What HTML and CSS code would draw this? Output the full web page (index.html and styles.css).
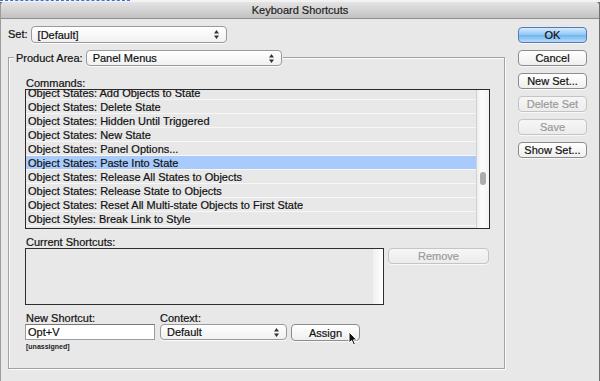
FILE: index.html
```html
<!DOCTYPE html>
<html lang="en">
<head>
  <meta charset="UTF-8" />
  <meta name="viewport" content="width=device-width, initial-scale=1.0"/>
  <title>Keyboard Shortcuts</title>
  <link rel="stylesheet" href="styles.css">
</head>
<body>
  <div class="desk"><div class="desk-dash"></div></div>
  <div class="window">
    <div class="titlebar">Keyboard Shortcuts</div>
    <div class="dialog">
      <div class="main">
        <div class="set-row">
          <span class="lbl">Set:</span>
          <div class="popup set-popup">
            <span>[Default]</span>
            <svg class="arrows" width="5" height="9" viewBox="0 0 5 9"><path d="M2.5 0 L5 3.5 H0 Z M2.5 9 L5 5.5 H0 Z" fill="#333"/></svg>
          </div>
        </div>

        <div class="group">
          <div class="group-head">
            <span class="lbl">Product Area:</span>
            <div class="popup area-popup">
              <span>Panel Menus</span>
              <svg class="arrows" width="5" height="9" viewBox="0 0 5 9"><path d="M2.5 0 L5 3.5 H0 Z M2.5 9 L5 5.5 H0 Z" fill="#333"/></svg>
            </div>
          </div>

          <div class="field-label">Commands:</div>
          <div class="list">
            <div class="rows">
              <div class="row first">Object States: Add Objects to State</div>
              <div class="row">Object States: Delete State</div>
              <div class="row">Object States: Hidden Until Triggered</div>
              <div class="row">Object States: New State</div>
              <div class="row">Object States: Panel Options...</div>
              <div class="row selected">Object States: Paste Into State</div>
              <div class="row">Object States: Release All States to Objects</div>
              <div class="row">Object States: Release State to Objects</div>
              <div class="row">Object States: Reset All Multi-state Objects to First State</div>
              <div class="row">Object Styles: Break Link to Style</div>
            </div>
            <div class="scroll"><div class="thumb"></div></div>
          </div>

          <div class="field-label">Current Shortcuts:</div>
          <div class="shortcut-row">
            <div class="shortcut-box"><div class="box-strip"></div></div>
            <button class="btn remove" disabled>Remove</button>
          </div>

          <div class="new-row">
            <div class="col">
              <div class="field-label">New Shortcut:</div>
              <div class="text-input">Opt+V</div>
              <div class="note">[unassigned]</div>
            </div>
            <div class="col context">
              <div class="field-label">Context:</div>
              <div class="popup context-popup">
                <span>Default</span>
                <svg class="arrows" width="5" height="9" viewBox="0 0 5 9"><path d="M2.5 0 L5 3.5 H0 Z M2.5 9 L5 5.5 H0 Z" fill="#333"/></svg>
              </div>
            </div>
            <div class="assign-wrap">
              <button class="btn assign">Assign</button>
              <svg class="cursor" width="10" height="15" viewBox="0 0 10 15">
                <path d="M1 1 L1 12 L3.6 9.6 L5.6 14 L7.4 13.2 L5.4 8.9 L8.8 8.9 Z" fill="#111" stroke="#fff" stroke-width="1"/>
              </svg>
            </div>
          </div>
        </div>
      </div>

      <div class="side">
        <button class="btn default">OK</button>
        <button class="btn">Cancel</button>
        <button class="btn">New Set...</button>
        <button class="btn" disabled>Delete Set</button>
        <button class="btn" disabled>Save</button>
        <button class="btn">Show Set...</button>
      </div>
    </div>
  </div>
</body>
</html>
```

FILE: styles.css
```css
body {
  margin: 0;
  width: 600px;
  height: 381px;
  overflow: hidden;
  background-color: #6f6f6f;
  font-family: 'Liberation Sans', Arial, sans-serif;
  font-size: 11px;
  color: #111;
  -webkit-text-stroke: 0.2px;
}
.desk {
  height: 2px;
  background-color: #f2f2f2;
}
.desk-dash {
  width: 130px;
  border-top: 1px dashed #3b6fe0;
}
.window {
  width: 598px;
  height: 379px;
  background-color: #e8e8e8;
  border-left: 1px solid #9c9c9c;
  border-radius: 4px 4px 0 0;
  overflow: hidden;
}
.titlebar {
  height: 16px;
  line-height: 17px;
  text-align: center;
  font-size: 11px;
  color: #222;
  background: linear-gradient(#e4e4e4, #c2c2c2);
  border-bottom: 1px solid #8e8e8e;
}
.dialog {
  display: flex;
  padding: 7px 0 0 7px;
}
.main {
  width: 497px;
}
.lbl {
  line-height: 17px;
}
.set-row {
  display: flex;
  align-items: center;
  height: 17px;
}
.popup {
  display: flex;
  align-items: center;
  justify-content: space-between;
  box-sizing: border-box;
  height: 17px;
  padding: 0 7px 0 6px;
  background: linear-gradient(#ffffff, #f1f1f1);
  border: 1px solid #9a9a9a;
  border-radius: 4px;
  box-shadow: 0 1px 0 rgba(255, 255, 255, 0.8);
}
.set-popup {
  width: 196px;
  margin-left: 3px;
}
.group {
  box-sizing: border-box;
  height: 312px;
  margin-top: 14px;
  border: 1px solid #a2a2a2;
  box-shadow: 1px 1px 0 #fbfbfb, inset 1px 1px 0 #fbfbfb;
}
.group-head {
  display: flex;
  align-items: center;
  width: fit-content;
  height: 16px;
  margin: -8px 0 0 5px;
  padding: 0 1px 0 2px;
  background-color: #e8e8e8;
}
.area-popup {
  width: 196px;
  height: 16px;
  margin-left: 3px;
}
.field-label {
  height: 13px;
  line-height: 14px;
  margin: 10px 0 0 17px;
}
.list {
  display: flex;
  box-sizing: border-box;
  width: 465px;
  height: 140px;
  margin-left: 16px;
  border: 1px solid #2a2a2a;
  overflow: hidden;
}
.rows {
  flex: 1;
  overflow: hidden;
}
.row {
  height: 13px;
  line-height: 15px;
  padding-left: 2px;
  border-bottom: 1px solid #f7f7f7;
  white-space: nowrap;
}
.row.first {
  margin-top: -4px;
}
.row.selected {
  background-color: #a8cbfc;
}
.scroll {
  position: relative;
  width: 12px;
  background: linear-gradient(90deg, #eeeeee, #fdfdfd 40%, #f4f4f4);
  border-left: 1px solid #d0d0d0;
}
.thumb {
  position: absolute;
  top: 82px;
  left: 3px;
  width: 6px;
  height: 13px;
  border-radius: 3px;
  background-color: #acacac;
}
.shortcut-row {
  display: flex;
  align-items: flex-start;
  margin-left: 16px;
}
.list + .field-label {
  margin-top: 6px;
}
.shortcut-box {
  display: flex;
  justify-content: flex-end;
  box-sizing: border-box;
  width: 359px;
  height: 57px;
  border: 1px solid #2e2e2e;
}
.box-strip {
  width: 10px;
  background: linear-gradient(90deg, #f0f0f0, #ffffff);
}
.btn {
  box-sizing: border-box;
  height: 16px;
  padding: 0;
  font-family: 'Liberation Sans', Arial, sans-serif;
  font-size: 11px;
  line-height: 14px;
  color: #111;
  -webkit-text-stroke: 0.2px;
  background: linear-gradient(#ffffff, #efefef);
  border: 1px solid #8c8c8c;
  border-radius: 4px;
  box-shadow: 0 1px 0 rgba(255, 255, 255, 0.7);
}
.btn:disabled {
  color: #9a9a9a;
  border-color: #c4c4c4;
  background: linear-gradient(#f6f6f6, #ececec);
}
.btn.default {
  background: linear-gradient(#d4ebfd, #8fc6f5 50%, #6fb3f0 51%, #b7dcfb);
  border-color: #5a78b0;
}
.remove {
  width: 101px;
  margin-left: 4px;
}
.new-row {
  display: flex;
  align-items: flex-start;
  margin-left: 16px;
}
.new-row .field-label {
  margin: 6px 0 0 1px;
}
.text-input {
  box-sizing: border-box;
  width: 130px;
  height: 16px;
  line-height: 15px;
  padding-left: 2px;
  background-color: #fff;
  border: 1px solid #9c9c9c;
  border-top-color: #777;
}
.note {
  margin-top: 3px;
  padding-left: 1px;
  font-size: 7px;
  font-weight: bold;
  color: #222;
  -webkit-text-stroke: 0;
}
.context {
  margin-left: 4px;
}
.context-popup {
  width: 127px;
  height: 16px;
  margin-left: 1px;
}
.assign-wrap {
  position: relative;
  margin: 19px 0 0 4px;
}
.assign {
  width: 69px;
  height: 17px;
}
.cursor {
  position: absolute;
  left: 57px;
  top: 7px;
}
.side {
  display: flex;
  flex-direction: column;
  gap: 7px;
  width: 69px;
  margin: 1px 0 0 13px;
}
```
